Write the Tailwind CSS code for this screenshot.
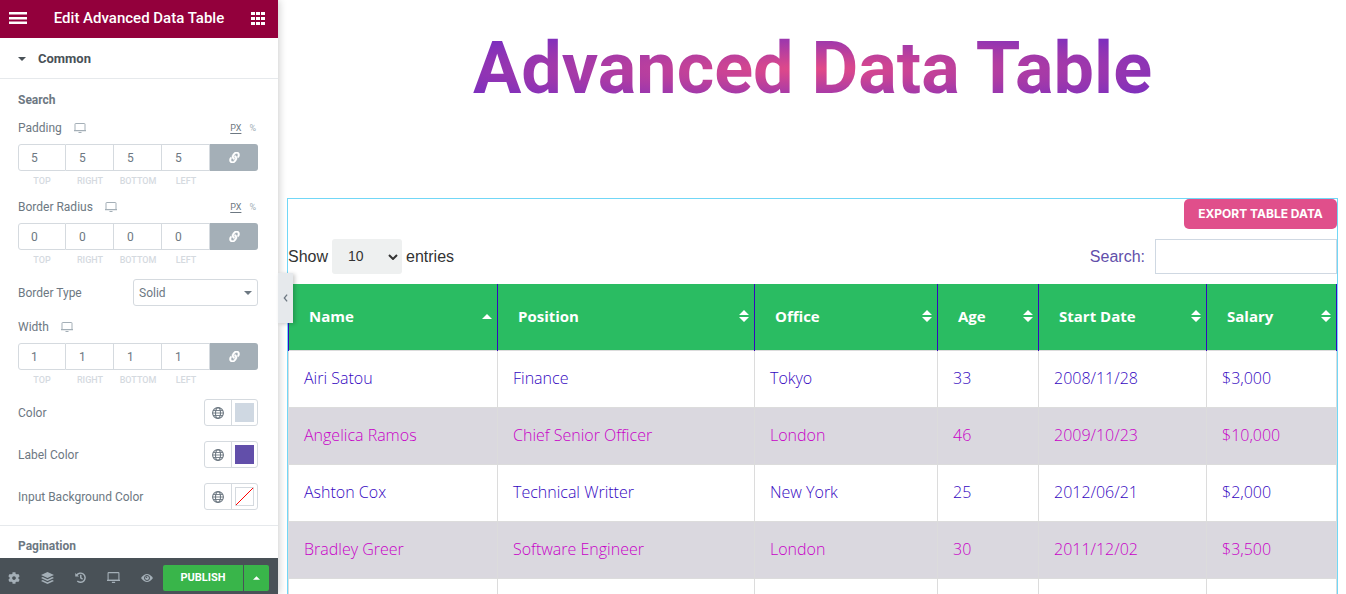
<!DOCTYPE html>
<html lang="en">
<head>
  <meta charset="UTF-8" />
  <title>Edit Advanced Data Table</title>
  <meta name="viewport" content="width=device-width, initial-scale=1.0" />
  <script src="https://cdn.jsdelivr.net/npm/@tailwindcss/browser@4"></script>
</head>
<body class="bg-white h-screen overflow-hidden flex font-['Roboto',sans-serif]">

  <!-- icons -->
  <svg class="hidden">
    <symbol id="desktop" viewBox="0 0 12 10"><path d="M1.500.5h9q.5 0 .5.5v6.500H1V1q0-.5.5-.5z" fill="none" stroke="currentColor" /><path d="M0 7h12v1.300H0zM4.500 9h3v1h-3z" fill="currentColor" /></symbol>
    <symbol id="link" viewBox="0 0 512 512"><path fill="currentColor" transform="rotate(-8 256 256)" d="M326.612 185.391c59.747 59.809 58.927 155.698.36 214.59-.11.12-.24.25-.36.37l-67.2 67.2c-59.27 59.27-155.699 59.262-214.96 0-59.27-59.26-59.27-155.7 0-214.96l37.106-37.106c9.84-9.84 26.786-3.3 27.294 10.606.648 17.722 3.826 35.527 9.69 52.721 1.986 5.822.567 12.262-3.783 16.612l-13.087 13.087c-28.026 28.026-28.905 73.66-1.155 101.96 28.024 28.579 74.086 28.749 102.325.51l67.2-67.19c28.191-28.191 28.073-73.757 0-101.83-3.701-3.694-7.429-6.564-10.341-8.569a16.037 16.037 0 0 1-6.947-12.606c-.396-10.567 3.348-21.456 11.698-29.806l21.054-21.055c5.521-5.521 14.182-6.199 20.584-1.731a152.482 152.482 0 0 1 20.522 17.197zM467.547 44.449c-59.261-59.262-155.69-59.27-214.96 0l-67.2 67.2c-.12.12-.25.25-.36.37-58.566 58.892-59.387 154.781.36 214.59a152.454 152.454 0 0 0 20.521 17.196c6.402 4.468 15.064 3.789 20.584-1.731l21.054-21.055c8.35-8.35 12.094-19.239 11.698-29.806a16.037 16.037 0 0 0-6.947-12.606c-2.912-2.005-6.64-4.875-10.341-8.569-28.073-28.073-28.191-73.639 0-101.83l67.2-67.19c28.239-28.239 74.3-28.069 102.325.51 27.75 28.3 26.872 73.934-1.155 101.96l-13.087 13.087c-4.35 4.35-5.769 10.79-3.783 16.612 5.864 17.194 9.042 34.999 9.69 52.721.509 13.906 17.454 20.446 27.294 10.606l37.106-37.106c59.271-59.259 59.271-155.699.001-214.959z" stroke="currentColor" stroke-width="16" /></symbol>
    <symbol id="globe" viewBox="0 0 12 12"><g fill="none" stroke="currentColor" stroke-width="1.100"><circle cx="6" cy="6" r="5.400" /><ellipse cx="6" cy="6" rx="2.500" ry="5.400" /><path d="M1 3.500h10M.6 6h10.800M1 8.500h10" stroke-width=".9" /></g></symbol>
    <symbol id="sort" viewBox="0 0 10 12"><path fill="currentColor" d="M5 0l5 5H0zM5 12l5-5H0z" /></symbol>
  </svg>

  <aside class="relative z-10 w-[278px] shrink-0 h-screen flex flex-col bg-white text-[#6d7882] text-xs leading-[14px] shadow-[1px_0_8px_rgba(0,0,0,0.2)]">
    <header class="h-[38px] shrink-0 bg-[#93003c] text-white flex items-center justify-between pl-[9px] pr-[13px] pb-[2px]">
      <button aria-label="Menu"><svg class="w-[18px] h-3" viewBox="0 0 18 12" fill="currentColor"><path d="M0 0h18v2.500H0zM0 5h18v2.500H0zM0 9.500h18V12H0z" /></svg></button>
      <h1 class="text-[15px] leading-5 font-medium">Edit Advanced Data Table</h1>
      <button aria-label="Widgets"><svg class="w-[14px] h-[13px]" viewBox="0 0 14 13" fill="currentColor"><path d="M0 0h4v3H0zM5 0h4v3H5zM10 0h4v3h-4zM0 5h4v3H0zM5 5h4v3H5zM10 5h4v3h-4zM0 10h4v3H0zM5 10h4v3H5zM10 10h4v3h-4z" /></svg></button>
    </header>

    <button class="h-[41px] shrink-0 border-b border-[#e6e9ec] flex items-center gap-3 pl-[18px] pt-px text-[13px] font-bold text-[#495157]">
      <svg class="w-2 h-1" viewBox="0 0 8 4" fill="currentColor"><path d="M0 0h8L4 4z" /></svg>
      Common
    </button>

    <div class="flex-1 min-h-0 overflow-hidden">
      <section class="px-5 pl-[18px] pt-[14px] pb-[15px] border-b border-[#e6e9ec]">
        <h2 class="font-bold mb-[14px]">Search</h2>

        <fieldset>
          <div class="flex items-center mb-[9px]">
            <span>Padding</span>
            <svg class="w-3 h-[10px] ml-3 text-[#a4afb7]"><use href="#desktop" /></svg>
            <span class="ml-auto mr-[2px] flex gap-2 text-[9px]"><button class="underline underline-offset-2">PX</button><button class="text-[#a4afb7]">%</button></span>
          </div>
          <div class="flex h-[27px] text-[#6d7882]">
            <input id="pt" value="5" class="w-12 border border-[#d5dadf] rounded-l-[3px] pl-3" />
            <input id="pr" value="5" class="w-12 border-y border-r border-[#d5dadf] pl-[13px]" />
            <input id="pb" value="5" class="w-12 border-y border-r border-[#d5dadf] pl-[13px]" />
            <input id="pl" value="5" class="w-12 border-y border-r border-[#d5dadf] pl-[13px]" />
            <button aria-label="Link values" class="flex-1 bg-[#a4afb7] text-white rounded-r-[3px] flex items-center justify-center"><svg class="w-[11px] h-[11px]"><use href="#link" /></svg></button>
          </div>
          <div class="flex mt-1 text-[9px] leading-3 text-[#d5dadf] font-medium text-center">
            <label for="pt" class="w-12">TOP</label><label for="pr" class="w-12">RIGHT</label><label for="pb" class="w-12">BOTTOM</label><label for="pl" class="w-12">LEFT</label>
          </div>
        </fieldset>

        <fieldset class="mt-[13px]">
          <div class="flex items-center mb-[9px]">
            <span>Border Radius</span>
            <svg class="w-3 h-[10px] ml-3 text-[#a4afb7]"><use href="#desktop" /></svg>
            <span class="ml-auto mr-[2px] flex gap-2 text-[9px]"><button class="underline underline-offset-2">PX</button><button class="text-[#a4afb7]">%</button></span>
          </div>
          <div class="flex h-[27px] text-[#6d7882]">
            <input id="rt" value="0" class="w-12 border border-[#d5dadf] rounded-l-[3px] pl-3" />
            <input id="rr" value="0" class="w-12 border-y border-r border-[#d5dadf] pl-[13px]" />
            <input id="rb" value="0" class="w-12 border-y border-r border-[#d5dadf] pl-[13px]" />
            <input id="rl" value="0" class="w-12 border-y border-r border-[#d5dadf] pl-[13px]" />
            <button aria-label="Link values" class="flex-1 bg-[#a4afb7] text-white rounded-r-[3px] flex items-center justify-center"><svg class="w-[11px] h-[11px]"><use href="#link" /></svg></button>
          </div>
          <div class="flex mt-1 text-[9px] leading-3 text-[#d5dadf] font-medium text-center">
            <label for="rt" class="w-12">TOP</label><label for="rr" class="w-12">RIGHT</label><label for="rb" class="w-12">BOTTOM</label><label for="rl" class="w-12">LEFT</label>
          </div>
        </fieldset>

        <div class="mt-[13px] flex items-center justify-between">
          <label for="borderType">Border Type</label>
          <div class="grid items-center w-[125px]">
            <select id="borderType" class="col-start-1 row-start-1 appearance-none h-[27px] border border-[#d5dadf] rounded-[3px] pl-[5px]">
              <option>Solid</option>
              <option>Dashed</option>
              <option>Dotted</option>
            </select>
            <svg class="col-start-1 row-start-1 justify-self-end mr-[6px] w-2 h-1 pointer-events-none" viewBox="0 0 8 4" fill="currentColor"><path d="M0 0h8L4 4z" /></svg>
          </div>
        </div>

        <fieldset class="mt-[14px]">
          <div class="flex items-center mb-[9px]">
            <span>Width</span>
            <svg class="w-3 h-[10px] ml-3 text-[#a4afb7]"><use href="#desktop" /></svg>
          </div>
          <div class="flex h-[27px] text-[#6d7882]">
            <input id="wt" value="1" class="w-12 border border-[#d5dadf] rounded-l-[3px] pl-3" />
            <input id="wr" value="1" class="w-12 border-y border-r border-[#d5dadf] pl-[13px]" />
            <input id="wb" value="1" class="w-12 border-y border-r border-[#d5dadf] pl-[13px]" />
            <input id="wl" value="1" class="w-12 border-y border-r border-[#d5dadf] pl-[13px]" />
            <button aria-label="Link values" class="flex-1 bg-[#a4afb7] text-white rounded-r-[3px] flex items-center justify-center"><svg class="w-[11px] h-[11px]"><use href="#link" /></svg></button>
          </div>
          <div class="flex mt-1 text-[9px] leading-3 text-[#d5dadf] font-medium text-center">
            <label for="wt" class="w-12">TOP</label><label for="wr" class="w-12">RIGHT</label><label for="wb" class="w-12">BOTTOM</label><label for="wl" class="w-12">LEFT</label>
          </div>
        </fieldset>

        <div class="mt-[13px] flex flex-col gap-[15px]">
          <div class="flex items-center justify-between">
            <span>Color</span>
            <div class="flex w-[54px] h-[27px] border border-[#d5dadf] rounded-[3px]">
              <button aria-label="Global color" class="w-[27px] border-r border-[#d5dadf] flex items-center justify-center"><svg class="w-3 h-3"><use href="#globe" /></svg></button>
              <button aria-label="Color" class="m-[3px] w-[19px] bg-[#cfd8e2]"></button>
            </div>
          </div>
          <div class="flex items-center justify-between">
            <span>Label Color</span>
            <div class="flex w-[54px] h-[27px] border border-[#d5dadf] rounded-[3px]">
              <button aria-label="Global color" class="w-[27px] border-r border-[#d5dadf] flex items-center justify-center"><svg class="w-3 h-3"><use href="#globe" /></svg></button>
              <button aria-label="Label color" class="m-[3px] w-[19px] bg-[#624faa]"></button>
            </div>
          </div>
          <div class="flex items-center justify-between">
            <span>Input Background Color</span>
            <div class="flex w-[54px] h-[27px] border border-[#d5dadf] rounded-[3px]">
              <button aria-label="Global color" class="w-[27px] border-r border-[#d5dadf] flex items-center justify-center"><svg class="w-3 h-3"><use href="#globe" /></svg></button>
              <button aria-label="Input background color" class="m-[3px] w-[19px] border border-[#d5dadf]"><svg class="w-full h-full" viewBox="0 0 17 17"><path d="M0 17L17 0" stroke="#f00" /></svg></button>
            </div>
          </div>
        </div>
      </section>

      <section class="pl-[18px] pt-[13px]">
        <h2 class="font-bold">Pagination</h2>
      </section>
    </div>

    <footer class="h-9 shrink-0 bg-[#495157] text-[#a4afb7] flex items-center pl-2 pr-[9px] pt-[3px]">
      <div class="flex flex-1 items-center justify-between pr-[10px]">
        <button aria-label="Settings"><svg class="w-3 h-3" viewBox="0 0 512 512" fill="currentColor"><path d="M487.4 315.7l-42.6-24.6c4.3-23.2 4.3-47 0-70.2l42.6-24.6c4.9-2.8 7.1-8.6 5.5-14-11.1-35.6-30-67.8-54.7-94.6-3.8-4.1-10-5.1-14.8-2.3L380.8 110c-17.900-15.400-38.500-27.300-60.800-35.100V25.800c0-5.600-3.900-10.500-9.400-11.700-36.700-8.200-74.300-7.800-109.200 0-5.500 1.200-9.400 6.100-9.400 11.700V75c-22.200 7.900-42.800 19.800-60.800 35.100L88.700 85.500c-4.900-2.800-11-1.900-14.800 2.300-24.700 26.700-43.600 58.900-54.700 94.600-1.700 5.400.6 11.200 5.500 14L67.300 221c-4.300 23.200-4.300 47 0 70.200l-42.600 24.600c-4.900 2.800-7.100 8.600-5.500 14 11.100 35.600 30 67.800 54.700 94.600 3.800 4.100 10 5.100 14.800 2.300l42.600-24.600c17.900 15.400 38.500 27.300 60.800 35.100v49.200c0 5.600 3.900 10.500 9.400 11.700 36.700 8.200 74.300 7.800 109.200 0 5.500-1.200 9.400-6.100 9.400-11.700v-49.200c22.200-7.900 42.800-19.800 60.800-35.100l42.600 24.600c4.900 2.800 11 1.900 14.800-2.300 24.700-26.700 43.600-58.900 54.700-94.600 1.500-5.500-.7-11.300-5.600-14.100zM256 336c-44.100 0-80-35.900-80-80s35.900-80 80-80 80 35.900 80 80-35.900 80-80 80z" /></svg></button>
        <button aria-label="Navigator"><svg class="w-[13px] h-3" viewBox="0 0 13 12" fill="currentColor"><path d="M6.500 0L13 3 6.500 6 0 3zM1.700 5L6.500 7.200 11.300 5 13 6 6.500 9 0 6zM1.700 8L6.500 10.200 11.300 8 13 9 6.500 12 0 9z" /></svg></button>
        <button aria-label="History"><svg class="w-[11px] h-[11px]" viewBox="0 0 12 12" fill="none" stroke="currentColor" stroke-width="1.600"><path d="M1.800 3.500A5 5 0 1 1 2.500 9.800M6.300 3v3.500l2 1.200" /><path d="M.3 1v4h4z" fill="currentColor" stroke="none" /></svg></button>
        <button aria-label="Responsive mode"><svg class="w-[13px] h-[11px]"><use href="#desktop" /></svg></button>
        <button aria-label="Preview"><svg class="w-3 h-2" viewBox="0 0 12 8"><path d="M0 4Q6-4 12 4 6 12 0 4z" fill="currentColor" /><circle cx="6" cy="4" r="2.500" fill="none" stroke="#495157" /><circle cx="5.500" cy="3.300" r=".8" fill="#495157" /></svg></button>
      </div>
      <div class="flex gap-px h-[26px] text-white">
        <button class="w-20 bg-[#39b54a] rounded-l-[2px] pt-px text-[11px] font-bold">PUBLISH</button>
        <button aria-label="Save options" class="w-[25px] bg-[#39b54a] rounded-r-[2px] flex items-center justify-center"><svg class="w-[7px] h-1" viewBox="0 0 8 4" fill="currentColor"><path d="M0 4h8L4 0z" /></svg></button>
      </div>
    </footer>

    <button aria-label="Collapse panel" class="absolute left-full top-[273px] w-[15px] h-[50px] bg-[#e6e9ec] flex items-center justify-center shadow-[2px_1px_4px_rgba(0,0,0,0.2)]">
      <svg class="w-[5px] h-2" viewBox="0 0 4 8" fill="none" stroke="#6d7882" stroke-width="1.300"><path d="M3.600.6L.8 4l2.800 3.400" /></svg>
    </button>
  </aside>

  <main class="flex-1 min-w-0 flex flex-col pl-[9px] pr-2 pt-[33px]">
    <div class="text-center mb-[93px] h-[72px]">
      <h2 class="inline-block text-[72px] leading-[72px] font-bold bg-[radial-gradient(at_center,#e24a88,#6a2ac8)] bg-clip-text text-transparent">Advanced Data Table</h2>
    </div>

    <div class="flex-1 border-x border-t border-[#71d7f7] font-['Liberation_Sans',Arial,sans-serif] text-[#333]">
      <div class="flex justify-end">
        <button class="h-[30px] w-[153px] bg-[#e04f8b] text-white font-['Inter',sans-serif] text-xs font-bold rounded-[5px] whitespace-nowrap">EXPORT TABLE DATA</button>
      </div>
      <div class="flex justify-between mt-[10px] mb-[10px]">
        <label class="flex items-center gap-1">
          Show
          <span class="grid items-center w-[70px]">
            <select class="col-start-1 row-start-1 appearance-none h-[35px] rounded-[3px] bg-[#eef0f0] pl-4 text-[14px]">
              <option>10</option>
              <option>25</option>
              <option>50</option>
            </select>
            <svg class="col-start-1 row-start-1 justify-self-end mr-1 w-[10px] h-[6px] pointer-events-none" viewBox="0 0 10 6" fill="none" stroke="currentColor" stroke-width="2"><path d="M1 1l4 4 4-4" /></svg>
          </span>
          entries
        </label>
        <label class="flex items-center gap-[10px] text-[#624faa]">
          Search:
          <input type="search" class="w-[182px] h-[35px] border border-[#cfd8e2]" />
        </label>
      </div>

      <table class="w-full table-fixed border-collapse text-left font-['Open_Sans','Noto_Sans',sans-serif] text-base leading-6 text-[#3507bf]">
        <colgroup>
          <col class="w-[209px]" /><col class="w-[257px]" /><col class="w-[183px]" /><col class="w-[101px]" /><col class="w-[168px]" /><col class="w-[130px]" />
        </colgroup>
        <thead class="bg-[#2abc62] text-white text-[15px]">
          <tr class="h-[66px]">
            <th class="border-x border-[#3507bf] pl-5 pr-[5px] pb-px"><div class="flex items-center justify-between">Name <svg class="w-[10px] h-[5px]" viewBox="0 0 10 5" fill="currentColor"><path d="M5 0l5 5H0z" /></svg></div></th>
            <th class="border-x border-[#3507bf] pl-5 pr-[5px] pb-px"><div class="flex items-center justify-between">Position <svg class="w-[10px] h-3"><use href="#sort" /></svg></div></th>
            <th class="border-x border-[#3507bf] pl-5 pr-[5px] pb-px"><div class="flex items-center justify-between">Office <svg class="w-[10px] h-3"><use href="#sort" /></svg></div></th>
            <th class="border-x border-[#3507bf] pl-5 pr-[5px] pb-px"><div class="flex items-center justify-between">Age <svg class="w-[10px] h-3"><use href="#sort" /></svg></div></th>
            <th class="border-x border-[#3507bf] pl-5 pr-[5px] pb-px"><div class="flex items-center justify-between">Start Date <svg class="w-[10px] h-3"><use href="#sort" /></svg></div></th>
            <th class="border-x border-[#3507bf] pl-5 pr-[5px] pb-px"><div class="flex items-center justify-between">Salary <svg class="w-[10px] h-3"><use href="#sort" /></svg></div></th>
          </tr>
        </thead>
        <tbody class="font-light">
          <tr class="h-[57px]">
            <td class="border border-[#dcdcdc] pl-[15px] pb-[2px]">Airi Satou</td>
            <td class="border border-[#dcdcdc] pl-[15px] pb-[2px]">Finance</td>
            <td class="border border-[#dcdcdc] pl-[15px] pb-[2px]">Tokyo</td>
            <td class="border border-[#dcdcdc] pl-[15px] pb-[2px]">33</td>
            <td class="border border-[#dcdcdc] pl-[15px] pb-[2px]">2008/11/28</td>
            <td class="border border-[#dcdcdc] pl-[15px] pb-[2px]">$3,000</td>
          </tr>
          <tr class="h-[57px] bg-[#dad8df] text-[#c800c8]">
            <td class="border border-[#dcdcdc] pl-[15px] pb-[2px]">Angelica Ramos</td>
            <td class="border border-[#dcdcdc] pl-[15px] pb-[2px]">Chief Senior Officer</td>
            <td class="border border-[#dcdcdc] pl-[15px] pb-[2px]">London</td>
            <td class="border border-[#dcdcdc] pl-[15px] pb-[2px]">46</td>
            <td class="border border-[#dcdcdc] pl-[15px] pb-[2px]">2009/10/23</td>
            <td class="border border-[#dcdcdc] pl-[15px] pb-[2px]">$10,000</td>
          </tr>
          <tr class="h-[57px]">
            <td class="border border-[#dcdcdc] pl-[15px] pb-[2px]">Ashton Cox</td>
            <td class="border border-[#dcdcdc] pl-[15px] pb-[2px]">Technical Writter</td>
            <td class="border border-[#dcdcdc] pl-[15px] pb-[2px]">New York</td>
            <td class="border border-[#dcdcdc] pl-[15px] pb-[2px]">25</td>
            <td class="border border-[#dcdcdc] pl-[15px] pb-[2px]">2012/06/21</td>
            <td class="border border-[#dcdcdc] pl-[15px] pb-[2px]">$2,000</td>
          </tr>
          <tr class="h-[57px] bg-[#dad8df] text-[#c800c8]">
            <td class="border border-[#dcdcdc] pl-[15px] pb-[2px]">Bradley Greer</td>
            <td class="border border-[#dcdcdc] pl-[15px] pb-[2px]">Software Engineer</td>
            <td class="border border-[#dcdcdc] pl-[15px] pb-[2px]">London</td>
            <td class="border border-[#dcdcdc] pl-[15px] pb-[2px]">30</td>
            <td class="border border-[#dcdcdc] pl-[15px] pb-[2px]">2011/12/02</td>
            <td class="border border-[#dcdcdc] pl-[15px] pb-[2px]">$3,500</td>
          </tr>
          <tr class="h-4">
            <td class="border-x border-[#dcdcdc]"></td>
            <td class="border-x border-[#dcdcdc]"></td>
            <td class="border-x border-[#dcdcdc]"></td>
            <td class="border-x border-[#dcdcdc]"></td>
            <td class="border-x border-[#dcdcdc]"></td>
            <td class="border-x border-[#dcdcdc]"></td>
          </tr>
        </tbody>
      </table>
    </div>
  </main>
</body>
</html>
